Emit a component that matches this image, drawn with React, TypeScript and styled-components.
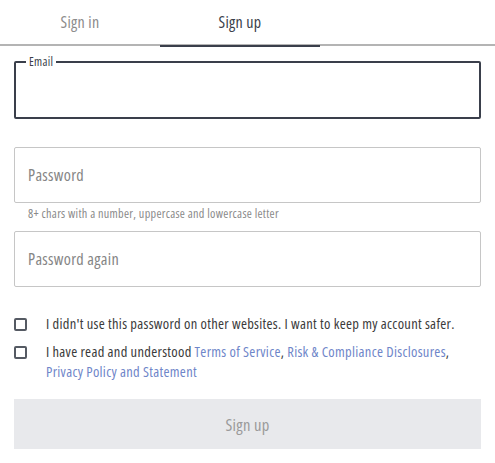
import styled, { createGlobalStyle } from "styled-components";

const GlobalStyle = createGlobalStyle`
  body {
    margin: 0;
    background: #ffffff;
    font-family: "Open Sans", "Noto Sans", sans-serif;
    font-stretch: 85%;
    letter-spacing: 0.3px;
  }
`;

const Page = styled.div`
  width: 495px;
  display: flex;
  flex-direction: column;
`;

const Tabs = styled.div`
  display: flex;
  height: 44px;
  border-bottom: 2px solid #b4b4b4;
`;

const Tab = styled.div<{ $active?: boolean }>`
  width: 160px;
  display: flex;
  align-items: center;
  justify-content: center;
  font-size: 16px;
  color: ${(p) => (p.$active ? "#3a3f4b" : "#8c8c8c")};
  border-bottom: 2px solid ${(p) => (p.$active ? "#3a3f4b" : "transparent")};
  margin-bottom: -3px;
  padding-bottom: 1px;
`;

const Form = styled.form`
  display: flex;
  flex-direction: column;
  padding: 9px 14px 0;
`;

const Outlined = styled.fieldset`
  margin: 0;
  height: 64px;
  box-sizing: border-box;
  padding: 0 12px;
  border: 2px solid #3a3f4b;
  border-radius: 2px;
`;

const Legend = styled.legend`
  padding: 0 3px;
  margin-left: -2px;
  font-size: 12px;
  line-height: 14px;
  color: #3a3f4b;
`;

const Field = styled.input`
  box-sizing: border-box;
  width: 100%;
  height: 56px;
  margin-top: 28px;
  padding: 0 13px;
  border: 1px solid #c6c6c6;
  border-radius: 2px;
  font-family: inherit;
  font-stretch: inherit;
  letter-spacing: inherit;
  font-size: 16.2px;
  color: #3a3f4b;
  outline: none;
  &::placeholder {
    color: #858585;
  }
`;

const SecondField = styled(Field)`
  margin-top: 10px;
`;

const Hint = styled.div`
  padding-left: 14px;
  margin-top: 4px;
  font-size: 12.2px;
  line-height: 14px;
  color: #8a8a8a;
`;

const Checks = styled.div`
  display: flex;
  flex-direction: column;
  gap: 8px;
  margin-top: 27px;
`;

const CheckRow = styled.label`
  display: flex;
  align-items: flex-start;
  gap: 19px;
  font-size: 14.5px;
  line-height: 20px;
  color: #3b3b3b;
`;

const Box = styled.span`
  flex: none;
  width: 13px;
  height: 13px;
  margin-top: 4px;
  box-sizing: border-box;
  border: 2px solid #555a63;
  border-radius: 2px;
`;

const Link = styled.a`
  color: #6f86c9;
  text-decoration: none;
`;

const Submit = styled.button`
  margin-top: 17px;
  height: 50px;
  border: none;
  border-radius: 0;
  background: #e8e9ec;
  color: #9a9a9a;
  font-family: inherit;
  font-stretch: inherit;
  letter-spacing: inherit;
  font-size: 16.5px;
`;

export default function App() {
  return (
    <Page>
      <GlobalStyle />
      <Tabs>
        <Tab>Sign in</Tab>
        <Tab $active>Sign up</Tab>
      </Tabs>
      <Form>
        <Outlined>
          <Legend>Email</Legend>
        </Outlined>
        <Field type="password" placeholder="Password" />
        <Hint>8+ chars with a number, uppercase and lowercase letter</Hint>
        <SecondField type="password" placeholder="Password again" />
        <Checks>
          <CheckRow>
            <Box />
            <span>I didn't use this password on other websites. I want to keep my account safer.</span>
          </CheckRow>
          <CheckRow>
            <Box />
            <span>
              I have read and understood <Link>Terms of Service</Link>,{" "}
              <Link>Risk &amp; Compliance Disclosures</Link>,{" "}
              <Link>Privacy Policy and Statement</Link>
            </span>
          </CheckRow>
        </Checks>
        <Submit type="button" disabled>
          Sign up
        </Submit>
      </Form>
    </Page>
  );
}
